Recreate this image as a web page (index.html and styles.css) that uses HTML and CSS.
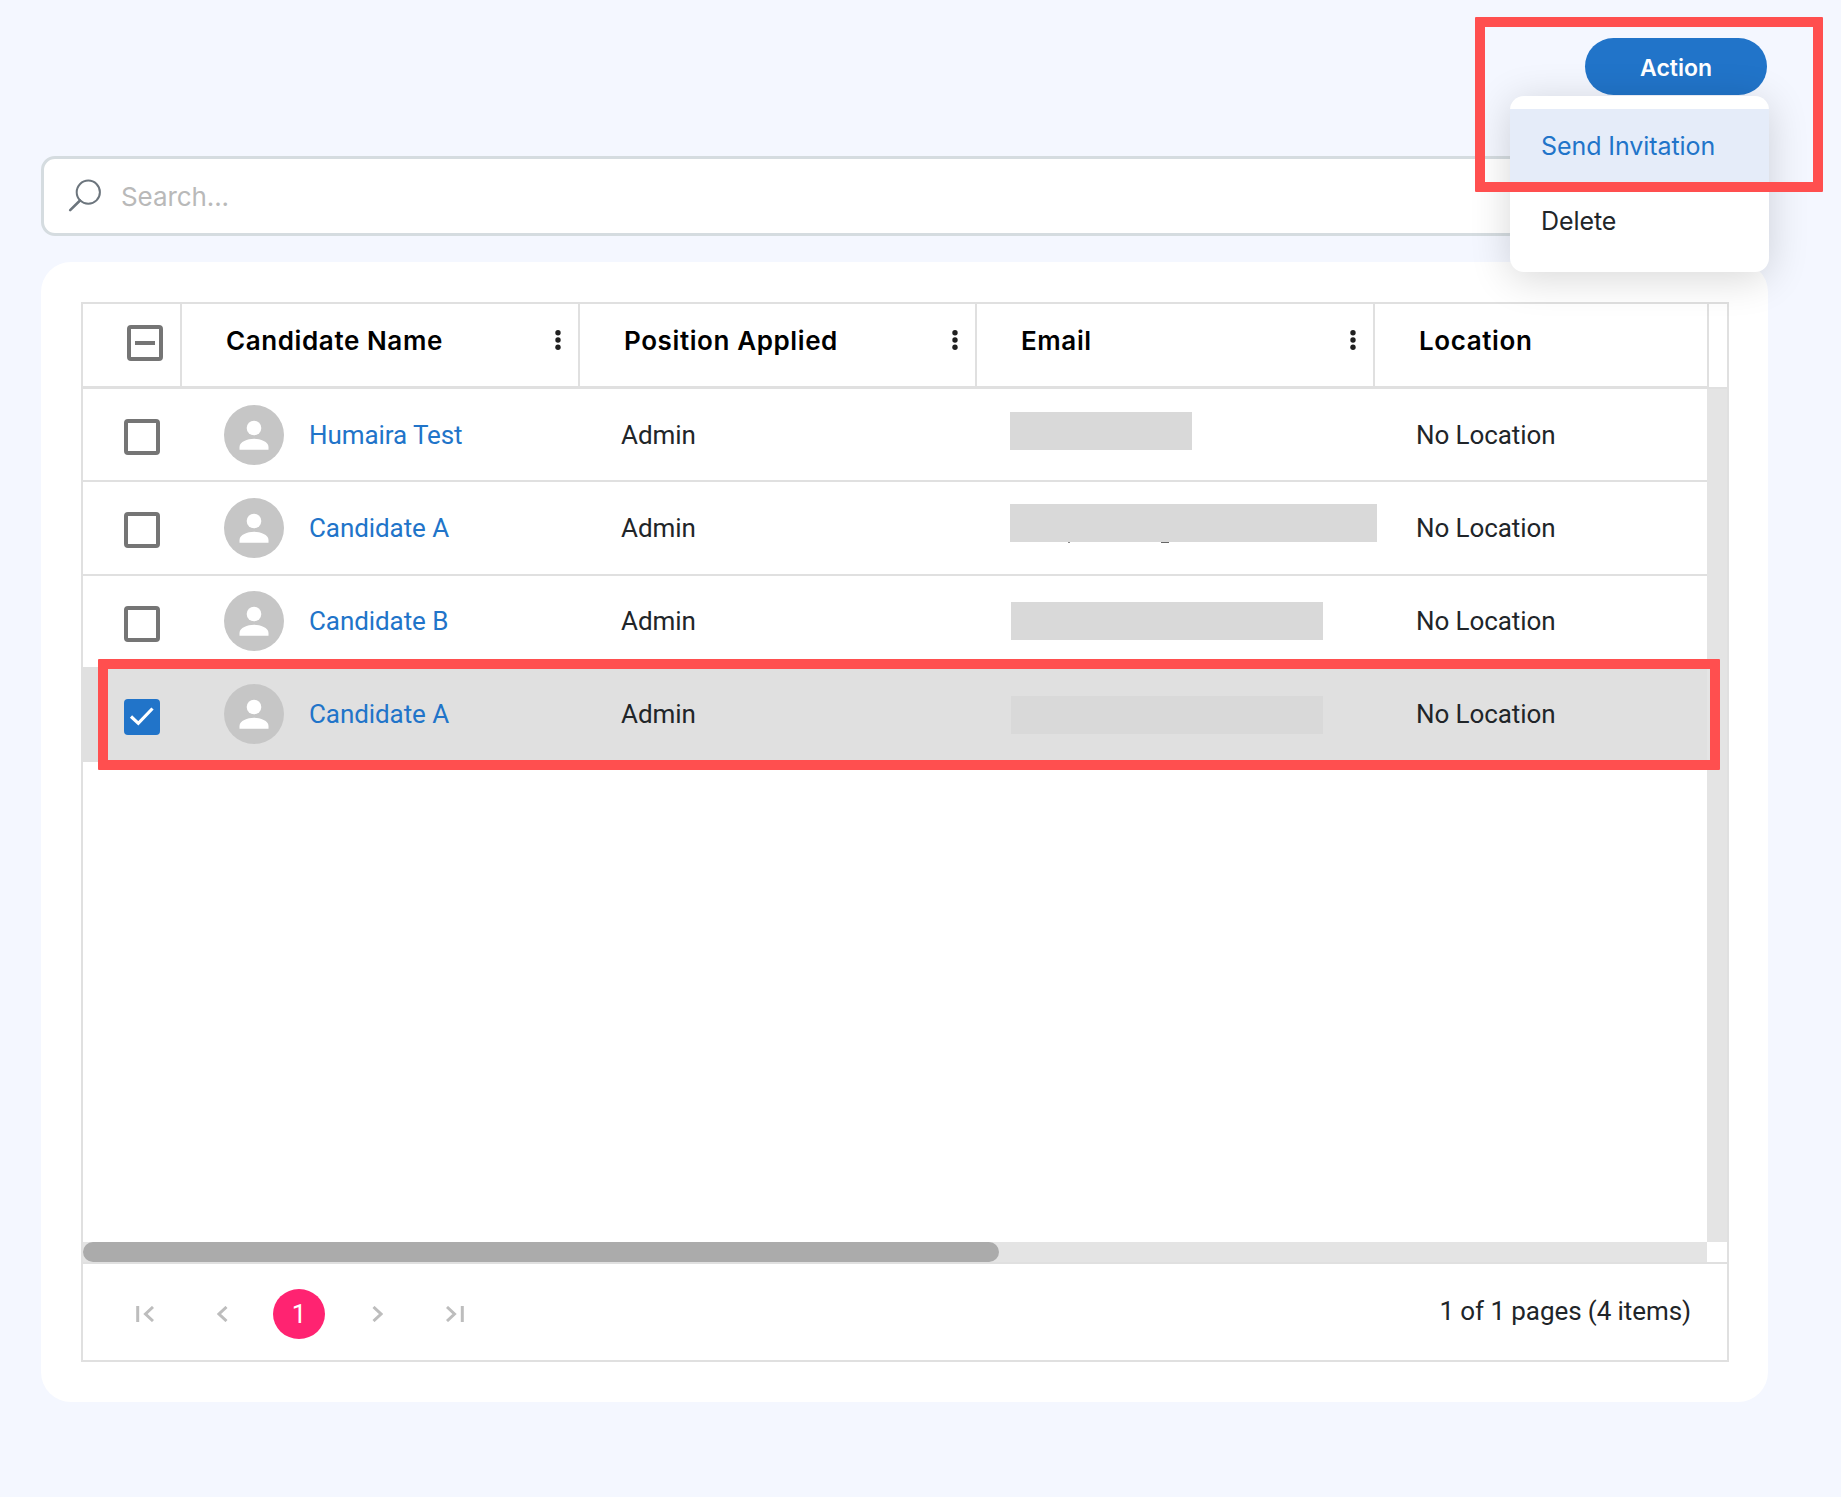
FILE: index.html
```html
<!DOCTYPE html>
<html lang="en">
<head>
  <meta charset="UTF-8">
  <meta name="viewport" content="width=device-width, initial-scale=1.0">
  <title>Candidates</title>
  <link rel="stylesheet" href="styles.css">
</head>
<body>
  <svg class="sprite" width="0" height="0">
    <symbol id="avatar" viewBox="0 0 60 60">
      <circle cx="30" cy="30" r="30" fill="#c6c6c6"/>
      <circle cx="30" cy="23" r="7.3" fill="#fff"/>
      <path d="M15.5 44.7V42c0-5.2 8-8.2 14.5-8.2S44.500 36.800 44.500 42v2.700z" fill="#fff"/>
    </symbol>
    <symbol id="more" viewBox="0 0 6 20">
      <circle cx="3" cy="2.700" r="2.700"/>
      <circle cx="3" cy="10" r="2.700"/>
      <circle cx="3" cy="17.300" r="2.700"/>
    </symbol>
  </svg>

  <div class="page">
    <div class="toolbar">
      <button class="action-btn">Action</button>
      <div class="menu">
        <div class="menu-item active">Send Invitation</div>
        <div class="menu-item">Delete</div>
      </div>
    </div>

    <div class="search">
      <svg width="34" height="34" viewBox="0 0 34 34" fill="none" stroke="#6c757d" stroke-width="2">
        <circle cx="20.300" cy="13.200" r="11.600"/>
        <path d="M12 21.500L2.200 31.200" stroke-width="2.600" stroke-linecap="round"/>
      </svg>
      <span class="placeholder">Search...</span>
    </div>

    <div class="card">
      <div class="grid">
        <div class="grid-header">
          <div class="columns head">
            <div class="th th-check"><span class="checkbox mixed"></span></div>
            <div class="th">Candidate Name<svg class="more"><use href="#more"/></svg></div>
            <div class="th">Position Applied<svg class="more"><use href="#more"/></svg></div>
            <div class="th">Email<svg class="more"><use href="#more"/></svg></div>
            <div class="th">Location</div>
          </div>
          <div class="header-gap"></div>
        </div>

        <div class="grid-body">
          <div class="rows">
            <div class="columns row">
              <div class="td-check"><span class="checkbox"></span><i class="dot"></i></div>
              <div class="td-name"><svg class="avatar"><use href="#avatar"/></svg><a>Humaira Test</a></div>
              <div class="td">Admin</div>
              <div class="td-email"><span class="mask mask-1"></span></div>
              <div class="td">No Location</div>
            </div>
            <div class="columns row tall">
              <div class="td-check"><span class="checkbox"></span><i class="dot"></i></div>
              <div class="td-name"><svg class="avatar"><use href="#avatar"/></svg><a>Candidate A</a></div>
              <div class="td">Admin</div>
              <div class="td-email"><span class="mask mask-2"></span></div>
              <div class="td">No Location</div>
            </div>
            <div class="columns row raised">
              <div class="td-check"><span class="checkbox"></span><i class="dot"></i></div>
              <div class="td-name"><svg class="avatar"><use href="#avatar"/></svg><a>Candidate B</a></div>
              <div class="td">Admin</div>
              <div class="td-email"><span class="mask mask-3"></span></div>
              <div class="td">No Location</div>
            </div>
            <div class="columns row raised selected">
              <div class="td-check">
                <span class="checkbox checked">
                  <svg width="36" height="36" viewBox="0 0 36 36" fill="none" stroke="#fff" stroke-width="3.200"><path d="M7 17.500l7.300 6.800L28.500 9.500"/></svg>
                </span><i class="dot"></i>
              </div>
              <div class="td-name"><svg class="avatar"><use href="#avatar"/></svg><a>Candidate A</a></div>
              <div class="td">Admin</div>
              <div class="td-email"><span class="mask mask-4"></span></div>
              <div class="td">No Location</div>
            </div>
          </div>
          <div class="v-track"></div>
        </div>

        <div class="scroll-line">
          <div class="h-track"><div class="thumb"></div></div>
          <div class="corner"></div>
        </div>

        <div class="pager">
          <div class="pages">
            <svg width="18" height="16" viewBox="0 0 18 16"><path d="M1.700 0v16M17 1L9.500 8l7.500 7"/></svg>
            <svg width="11" height="16" viewBox="0 0 11 16"><path d="M9.500 1L2 8l7.500 7"/></svg>
            <span class="current">1</span>
            <svg width="11" height="16" viewBox="0 0 11 16"><path d="M1.500 1L9 8l-7.500 7"/></svg>
            <svg width="18" height="16" viewBox="0 0 18 16"><path d="M16.300 0v16M1 1l7.500 7L1 15"/></svg>
          </div>
          <div class="page-info">1 of 1 pages (4 items)</div>
        </div>
      </div>
    </div>

    <!-- callouts -->
    <div class="callout callout-action"></div>
    <div class="callout callout-row"></div>
  </div>
</body>
</html>
```
FILE: styles.css
```css
* {
  box-sizing: border-box;
}
body {
  margin: 0;
  background: #f4f7ff;
  font-family: Roboto, sans-serif;
  font-size: 26px;
  letter-spacing: -0.08px;
  color: #212529;
}
.sprite {
  position: absolute;
}
.page {
  position: relative;
  width: 1841px;
  height: 1497px;
  padding: 38px 73px 0 41px;
  overflow: hidden;
}

/* toolbar */
.toolbar {
  position: relative;
  display: flex;
  justify-content: flex-end;
  height: 118px;
  padding-right: 1px;
}
.action-btn {
  width: 182px;
  height: 57px;
  padding: 2px 0 0;
  border: 0;
  border-radius: 29px;
  background: #2174c9;
  color: #fff;
  font: 600 23px Inter, sans-serif;
}
.menu {
  position: absolute;
  z-index: 2;
  top: 58px;
  right: -1px;
  width: 259px;
  height: 176px;
  padding: 13px 0;
  border-radius: 14px;
  background: #fff;
  box-shadow: 0 6px 40px rgba(0, 0, 0, 0.16);
  font-family: Inter, sans-serif;
  font-size: 25px;
  letter-spacing: -0.08px;
}
.menu-item {
  display: flex;
  align-items: center;
  height: 75px;
  padding: 0 0 1px 31px;
}
.menu-item.active {
  background: #e5ecf9;
  color: #2174c9;
}

/* search */
.search {
  display: flex;
  align-items: center;
  height: 80px;
  margin-bottom: 26px;
  padding-left: 24px;
  border: 3px solid #d5dce0;
  border-radius: 14px;
  background: #fff;
}
.placeholder {
  margin: 1px 0 0 19px;
  color: #b9b9b9;
  font-family: Inter, sans-serif;
  font-size: 26px;
}

/* grid */
.card {
  height: 1140px;
  padding: 40px 39px 0 40px;
  border-radius: 30px;
  background: #fff;
}
.grid {
  height: 1060px;
  border: 2px solid #e0e0e0;
}
.grid-header,
.grid-body,
.scroll-line {
  display: flex;
}
.columns {
  display: grid;
  grid-template-columns: 99px 398px 397px 398px 332px;
  width: 1624px;
}
.head {
  height: 85px;
  border-bottom: 3px solid #e0e0e0;
}
.th {
  display: flex;
  justify-content: space-between;
  align-items: flex-start;
  padding: 20px 17px 0 44px;
  border-right: 2px solid #e0e0e0;
  color: #000;
  font: 600 26px/34px Inter, sans-serif;
  letter-spacing: 0.6px;
  white-space: nowrap;
}
.th:last-child {
  border-right: 0;
}
.th-check {
  padding: 21px 0 0 44px;
}
.more {
  width: 6px;
  height: 20px;
  margin-top: 6px;
  fill: #212121;
}
.header-gap {
  width: 20px;
  height: 85px;
  border-left: 2px solid #e0e0e0;
  border-bottom: 2px solid #e0e0e0;
}
.grid-body {
  height: 853px;
}
.rows {
  width: 1624px;
}
.row {
  height: 93px;
  border-bottom: 2px solid #e0e0e0;
  align-items: center;
}
.row.tall {
  height: 94px;
}
.row.selected {
  background: #e0e0e0;
}
.td-check {
  display: flex;
  align-items: center;
  padding: 4px 0 0 41px;
}
.checkbox {
  flex: none;
  width: 36px;
  height: 36px;
  border: 4px solid #757575;
  border-radius: 4px;
}
.checkbox.mixed {
  display: flex;
  align-items: center;
  justify-content: center;
}
.checkbox.mixed::before {
  content: "";
  width: 20px;
  height: 4px;
  background: #757575;
}
.checkbox.checked {
  border: 0;
  background: #2174c9;
}
.checkbox svg {
  display: block;
}
.dot {
  width: 1px;
  height: 2px;
  margin: 5px 0 0 22px;
  background: #999;
}
.td-name {
  display: flex;
  align-items: center;
  padding-left: 42px;
}
.td-name a {
  margin-left: 25px;
  color: #2174c9;
}
.avatar {
  width: 60px;
  height: 60px;
}
.td {
  padding-left: 41px;
}
.raised .td-name,
.raised .td {
  padding-bottom: 2px;
}
.td-email {
  padding-left: 33px;
  align-self: start;
}
.mask {
  display: block;
  height: 38px;
  background: #d9d9d9;
}
.mask-1 {
  width: 182px;
  margin-top: 23px;
}
.mask-2 {
  width: 367px;
  margin-top: 22px;
}
.mask-3 {
  width: 312px;
  margin: 26px 0 0 1px;
}
.mask-4 {
  width: 312px;
  margin: 27px 0 0 1px;
}
.v-track {
  width: 20px;
  background: #e4e4e4;
}
.h-track {
  width: 1624px;
  height: 20px;
  background: #e4e4e4;
}
.thumb {
  width: 916px;
  height: 20px;
  border-radius: 10px;
  background: #ababab;
}
.corner {
  width: 20px;
}

/* descenders left below the masked address */
.mask-2::after {
  content: "";
  display: block;
  height: 39px;
  background:
    linear-gradient(#888, #888) 58px 38px / 2px 1px no-repeat,
    linear-gradient(#666, #666) 151px 38px / 8px 1px no-repeat;
}

/* pager */
.pager {
  display: flex;
  justify-content: space-between;
  height: 98px;
  border-top: 2px solid #e0e0e0;
}
.pages {
  display: flex;
  align-items: center;
  height: 100px;
  padding-left: 53px;
}
.pages svg {
  fill: none;
  stroke: #bdbdbd;
  stroke-width: 3;
}
.pages svg + svg {
  margin-left: 63px;
}
.current {
  width: 52px;
  height: 50px;
  margin: 0 47px 0 45px;
  border-radius: 26px / 25px;
  background: #ff2371;
  color: #fff;
  line-height: 51px;
  text-align: center;
}
.page-info {
  margin: 30px 36px 0 0;
  line-height: 34px;
}

/* callouts */
.callout {
  position: absolute;
  z-index: 3;
  border: 10px solid #ff4f4f;
  border-radius: 1px;
}
.callout-action {
  top: 17px;
  left: 1475px;
  width: 348px;
  height: 175px;
}
.callout-row {
  top: 659px;
  left: 98px;
  width: 1622px;
  height: 111px;
}
```
